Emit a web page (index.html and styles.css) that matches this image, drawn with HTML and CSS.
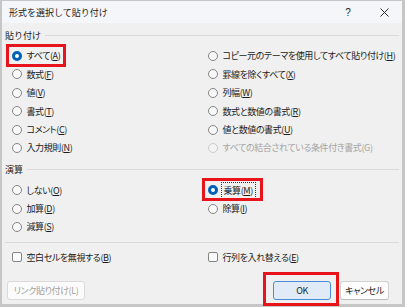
FILE: index.html
```html
<!DOCTYPE html>
<html lang="ja">
<head>
<meta charset="utf-8">
<title>形式を選択して貼り付け</title>
<link rel="stylesheet" href="styles.css">
</head>
<body>
<div class="dialog">
  <div class="titlebar">
    <span class="title">形式を選択して貼り付け</span>
    <span class="tb-btn help">?</span>
    <span class="tb-btn close"><svg width="9" height="9" viewBox="0 0 9 9"><path d="M0.5 0.5 L8.5 8.5 M8.5 0.5 L0.5 8.5" stroke="#2b2b2b" stroke-width="1" fill="none"/></svg></span>
  </div>
  <div class="body">
    <div class="group-head"><span>貼り付け</span><i class="rule"></i></div>
    <div class="grid">
      <div class="opt"><span class="mark"><span class="radio on"></span><span>すべて(<u>A</u>)</span></span></div>
      <div class="opt"><span class="radio"></span><span>コピー元のテーマを使用してすべて貼り付け(<u>H</u>)</span></div>
      <div class="opt"><span class="radio"></span><span>数式(<u>F</u>)</span></div>
      <div class="opt"><span class="radio"></span><span>罫線を除くすべて(<u>X</u>)</span></div>
      <div class="opt"><span class="radio"></span><span>値(<u>V</u>)</span></div>
      <div class="opt"><span class="radio"></span><span>列幅(<u>W</u>)</span></div>
      <div class="opt"><span class="radio"></span><span>書式(<u>T</u>)</span></div>
      <div class="opt"><span class="radio"></span><span>数式と数値の書式(<u>R</u>)</span></div>
      <div class="opt"><span class="radio"></span><span>コメント(<u>C</u>)</span></div>
      <div class="opt"><span class="radio"></span><span>値と数値の書式(<u>U</u>)</span></div>
      <div class="opt"><span class="radio"></span><span>入力規則(<u>N</u>)</span></div>
      <div class="opt disabled"><span class="radio"></span><span>すべての結合されている条件付き書式(G)</span></div>
    </div>
    <div class="group-head"><span>演算</span><i class="rule"></i></div>
    <div class="grid">
      <div class="opt"><span class="radio"></span><span>しない(<u>O</u>)</span></div>
      <div class="opt"><span class="mark wide"><span class="radio on"></span><span class="focus">乗算(<u>M</u>)</span></span></div>
      <div class="opt"><span class="radio"></span><span>加算(<u>D</u>)</span></div>
      <div class="opt"><span class="radio"></span><span>除算(<u>I</u>)</span></div>
      <div class="opt"><span class="radio"></span><span>減算(<u>S</u>)</span></div>
    </div>
    <div class="sep"></div>
    <div class="checks">
      <div class="opt"><span class="check"></span><span>空白セルを無視する(<u>B</u>)</span></div>
      <div class="opt"><span class="check"></span><span>行列を入れ替える(<u>E</u>)</span></div>
    </div>
    <div class="buttons">
      <span class="btn link">リンク貼り付け(L)</span>
      <span class="spacer"></span>
      <span class="btn ok">OK</span>
      <span class="btn cancel">キャンセル</span>
    </div>
  </div>
</div>
</body>
</html>
```
FILE: styles.css
```css
* { box-sizing: border-box; }
html, body { margin: 0; }
body {
  width: 405px;
  height: 307px;
  overflow: hidden;
  background: #c6c6c6;
  font-family: "Noto Sans CJK JP", "Noto Sans", sans-serif;
  font-size: 9px;
  letter-spacing: -0.4px;
  color: #1b1b1b;
  font-feature-settings: "palt";
}
u { text-decoration: underline; text-underline-offset: 1px; }
.dialog {
  margin: 1px 3px 0 2px;
  width: 400px;
  height: 303px;
  background: #f0f0f0;
  display: flex;
  flex-direction: column;
}
.titlebar {
  height: 22px;
  background: #f4f6fa;
  display: flex;
  align-items: center;
  padding-left: 7px;
}
.title { flex: 1; font-size: 9px; letter-spacing: 0; font-feature-settings: normal; }
.tb-btn {
  width: 36px;
  height: 22px;
  display: flex;
  align-items: center;
  justify-content: center;
}
.help { font-size: 10px; font-family: "Liberation Sans", sans-serif; letter-spacing: 0; }
.body {
  flex: 1;
  padding: 0 3px;
  display: flex;
  flex-direction: column;
}
.group-head {
  height: 14px;
  margin-top: 5px;
  display: flex;
  align-items: center;
  gap: 4px;
  font-size: 9px;
  letter-spacing: 0;
  font-feature-settings: normal;
}
.rule { flex: 1; height: 1px; background: #dadada; }
.grid {
  display: grid;
  grid-template-columns: 196px 1fr;
  grid-auto-rows: 18.4px;
  margin: 4.8px 0 0 7px;
}
.opt {
  display: flex;
  align-items: center;
  gap: 4.5px;
  white-space: nowrap;
}
.mark {
  position: relative;
  display: flex;
  align-items: center;
  gap: 4.5px;
  height: 100%;
}
.mark::after {
  content: "";
  position: absolute;
  top: -3px;
  bottom: -2px;
  left: -6px;
  right: -6px;
  border: 3px solid #e8141c;
}
.mark.wide::after { right: -9px; }
.radio {
  flex: none;
  width: 10px;
  height: 10px;
  border-radius: 50%;
  border: 1px solid #858585;
  background: #f8f8f8;
}
.radio.on { border: 3px solid #005fb8; background: #fff; }
.opt.disabled { color: #a5a5a5; }
.opt.disabled .radio { border-color: #cbcbcb; background: #f3f3f3; }
.focus { outline: 1px dotted #333; outline-offset: 1px; padding: 0 1px; }
.sep { height: 1px; background: #dadada; margin-top: 6px; }
.checks {
  display: grid;
  grid-template-columns: 196px 1fr;
  grid-auto-rows: 18px;
  margin: 5px 0 0 7px;
}
.check {
  flex: none;
  width: 10px;
  height: 10px;
  border-radius: 2px;
  border: 1px solid #858585;
  background: #fbfbfb;
}
.buttons {
  display: flex;
  margin-top: 15px;
  height: 19px;
}
.spacer { flex: 1; }
.btn {
  height: 19px;
  border: 1px solid #d1d1d1;
  border-bottom-color: #bdbdbd;
  border-radius: 3px;
  background: #fdfdfd;
  display: flex;
  align-items: center;
  justify-content: center;
  white-space: nowrap;
}
.btn.link { width: 78px; margin-left: 2px; color: #a0a0a0; border-color: #dadada; background: #fbfbfb; }
.btn.ok {
  position: relative;
  width: 58px;
  margin-right: 9px;
  background: #e0ebf7;
  border-color: #4a8bd8;
}
.btn.ok::after {
  content: "";
  position: absolute;
  top: -10px;
  bottom: -7px;
  left: -11px;
  right: -9px;
  border: 3px solid #e8141c;
}
.btn.cancel { width: 49px; margin-right: 10px; }
```
